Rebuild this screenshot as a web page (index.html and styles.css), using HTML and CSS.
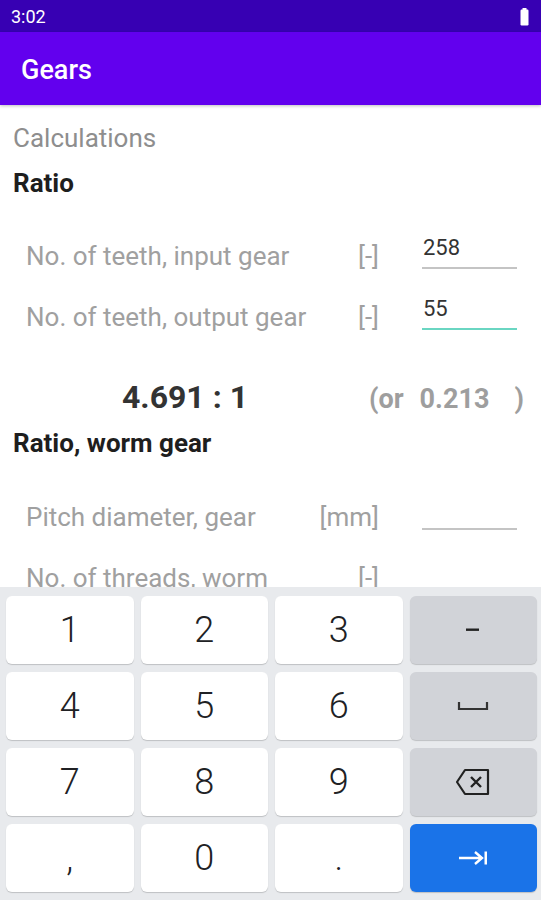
FILE: index.html
```html
<!DOCTYPE html>
<html lang="en">
<head>
    <meta charset="UTF-8">
    <meta name="viewport" content="width=device-width, initial-scale=1.0">
    <title>Gears</title>
    <link rel="stylesheet" href="styles.css">
</head>
<body>
    <div class="status">
        <span class="time">3:02</span>
        <svg class="battery" width="9" height="18" viewBox="0 0 9 18">
            <rect x="2.5" y="0" width="4" height="2" fill="#fff"/>
            <rect x="0.5" y="1.5" width="8" height="16" rx="1.2" fill="#fff"/>
        </svg>
    </div>

    <div class="appbar">Gears</div>

    <div class="content">
        <div class="calc">Calculations</div>
        <div class="heading">Ratio</div>

        <div class="row first">
            <span class="label">No. of teeth, input gear</span>
            <span class="unit">[-]</span>
            <span class="field">258</span>
        </div>
        <div class="row">
            <span class="label">No. of teeth, output gear</span>
            <span class="unit">[-]</span>
            <span class="field active">55</span>
        </div>

        <div class="result">
            <span class="ratio">4.691 : 1</span>
            <span class="or">(or</span>
            <span class="inv">0.213</span>
            <span class="close">)</span>
        </div>

        <div class="heading worm">Ratio, worm gear</div>

        <div class="row pitch">
            <span class="label">Pitch diameter, gear</span>
            <span class="unit">[mm]</span>
            <span class="field"></span>
        </div>
        <div class="row">
            <span class="label">No. of threads, worm</span>
            <span class="unit">[-]</span>
            <span class="field"></span>
        </div>
    </div>

    <div class="keyboard">
        <div class="key">1</div>
        <div class="key">2</div>
        <div class="key">3</div>
        <div class="key gray">
            <svg width="14" height="4" viewBox="0 0 14 4"><rect x="0" y="0.5" width="13" height="2.4" fill="#222"/></svg>
        </div>
        <div class="key">4</div>
        <div class="key">5</div>
        <div class="key">6</div>
        <div class="key gray">
            <svg width="32" height="10" viewBox="0 0 32 10"><path d="M2 1 V8 H30 V1" fill="none" stroke="#333" stroke-width="2.2"/></svg>
        </div>
        <div class="key">7</div>
        <div class="key">8</div>
        <div class="key">9</div>
        <div class="key gray">
            <svg width="36" height="28" viewBox="0 0 36 28">
                <path d="M10 2 H33 V26 H10 L2 14 Z" fill="none" stroke="#222" stroke-width="2.2" stroke-linejoin="round"/>
                <path d="M16 9 L26 19 M26 9 L16 19" stroke="#222" stroke-width="2.4"/>
            </svg>
        </div>
        <div class="key">,</div>
        <div class="key">0</div>
        <div class="key">.</div>
        <div class="key blue">
            <svg width="30" height="14" viewBox="0 0 30 14">
                <path d="M1 7 H24 M17 1 L24 7 L17 13" fill="none" stroke="#fff" stroke-width="2.4"/>
                <rect x="26.5" y="0.5" width="2.5" height="13" fill="#fff"/>
            </svg>
        </div>
    </div>
</body>
</html>
```

FILE: styles.css
```css
body{
    margin: 0;
    width: 541px;
    height: 900px;
    display: flex;
    flex-direction: column;
    overflow: hidden;
    font-family: Roboto, "Liberation Sans", sans-serif;
    background-color: white;
}
.status{
    height: 32px;
    background-color: #3700b3;
    display: flex;
    align-items: center;
    justify-content: space-between;
    padding: 0 12px 0 11px;
    flex-shrink: 0;
}
.time{
    color: white;
    font-size: 18px;
}
.battery{
    margin-top: 1px;
}
.appbar{
    height: 73px;
    background-color: #6200ee;
    color: white;
    font-size: 27px;
    font-weight: 500;
    display: flex;
    align-items: center;
    padding: 3px 0 0 21px;
    box-sizing: border-box;
    flex-shrink: 0;
    box-shadow: 0 1px 3px rgba(0, 0, 0, 0.25);
    position: relative;
}
.content{
    flex: 1;
    overflow: hidden;
    padding-left: 13px;
}
.calc{
    margin-top: 18px;
    font-size: 26px;
    line-height: 30px;
    color: #8e8e8e;
}
.heading{
    margin-top: 15px;
    font-size: 26px;
    line-height: 30px;
    font-weight: bold;
    color: #1e1e1e;
}
.row{
    display: flex;
    align-items: flex-end;
    height: 61px;
    padding-left: 13px;
}
.row.first{
    margin-top: 10px;
}
.row.pitch{
    margin-top: 11px;
}
.label{
    width: 293px;
    font-size: 26px;
    line-height: 26px;
    color: #a0a0a0;
}
.unit{
    width: 60px;
    text-align: right;
    font-size: 26px;
    line-height: 26px;
    color: #a0a0a0;
}
.field{
    margin-left: 43px;
    width: 94px;
    height: 26px;
    padding: 0 0 6px 1px;
    border-bottom: 2px solid #c4c4c4;
    font-size: 22px;
    line-height: 26px;
    color: #333;
}
.field.active{
    border-bottom-color: #6ad6c2;
}
.result{
    display: flex;
    align-items: baseline;
    margin-top: 47px;
    height: 40px;
    font-weight: bold;
}
.ratio{
    width: 344px;
    text-align: center;
    font-size: 32px;
    line-height: 40px;
    color: #333;
}
.or, .inv, .close{
    font-size: 27px;
    color: #9e9e9e;
}
.or{
    margin-left: 12px;
}
.inv{
    margin-left: 16px;
    width: 95px;
}
.heading.worm{
    margin-top: 11px;
}
.keyboard{
    flex-shrink: 0;
    height: 313px;
    box-sizing: border-box;
    background-color: #e8eaed;
    padding: 9px 4px 8px 6px;
    display: grid;
    grid-template-columns: repeat(4, 1fr);
    grid-template-rows: repeat(4, 68px);
    column-gap: 7px;
    row-gap: 8px;
}
.key{
    background-color: white;
    border-radius: 6px;
    box-shadow: 0 1px 1px rgba(0, 0, 0, 0.18);
    display: flex;
    align-items: center;
    justify-content: center;
    font-size: 36px;
    font-weight: 300;
    color: #202124;
}
.key.gray{
    background-color: #d1d3d8;
}
.key.blue{
    background-color: #1a73e8;
}
```
